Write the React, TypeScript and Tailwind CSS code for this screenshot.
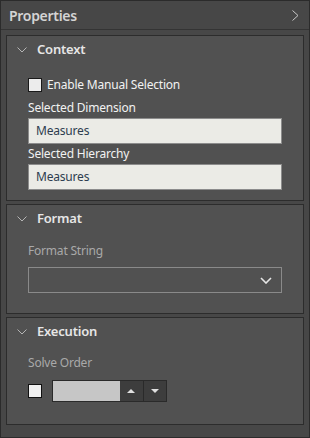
import React from "react";

const font = { fontFamily: '"Segoe UI", "Noto Sans", sans-serif' };

const ChevronDown = ({ className }: { className?: string }) => (
  <svg width="10" height="6" viewBox="0 0 10 6" className={className} fill="none">
    <path d="M0.5 0.5 L5 5 L9.5 0.5" stroke="currentColor" strokeWidth="1" />
  </svg>
);

const Section = ({
  title,
  className,
  children,
}: {
  title: string;
  className: string;
  children: React.ReactNode;
}) => (
  <div className={`mx-[5px] border border-[#2c2c2c] bg-[#515151] flex flex-col ${className}`}>
    <div className="h-[27px] flex items-center pl-[10px] gap-[10px] text-[#b5b5b5]">
      <ChevronDown />
      <span className="text-[13px] font-semibold text-[#e6e6e6] tracking-[-0.2px]">{title}</span>
    </div>
    {children}
  </div>
);

const TextBox = ({ value }: { value: string }) => (
  <div className="h-[26px] w-[254px] border border-[#8c8c8c] bg-[#ebebe6] flex items-center pl-[7px] text-[12px] text-[#2e3d4f] tracking-[-0.2px]">
    {value}
  </div>
);

export default function App() {
  return (
    <div
      className="w-[310px] h-[438px] bg-[#474747] border border-[#2b2b2b] flex flex-col"
      style={font}
    >
      <div className="h-[29px] border-b border-[#343434] flex items-center justify-between pl-[8px] pr-[10px] shrink-0">
        <span className="text-[14px] font-semibold text-[#d4d4d4] tracking-[-0.3px]">Properties</span>
        <svg width="7" height="11" viewBox="0 0 7 11" fill="none" className="text-[#c8c8c8]">
          <path d="M0.5 0.5 L6 5.5 L0.5 10.5" stroke="currentColor" strokeWidth="1" />
        </svg>
      </div>

      <div className="flex flex-col gap-[3px] pt-[5px]">
        <Section title="Context" className="h-[166px]">
          <div className="flex flex-col pl-[21px] pt-[14px]">
            <label className="flex items-center gap-[5px] h-[15px]">
              <span className="w-[14px] h-[14px] border border-[#1a1a1a] bg-[#ececec]" />
              <span className="text-[12px] text-[#f2f2f2] tracking-[-0.2px]">Enable Manual Selection</span>
            </label>
            <div className="text-[12px] text-[#f2f2f2] tracking-[-0.2px] h-[16px] mt-[8px] leading-[16px]">
              Selected Dimension
            </div>
            <div className="mt-[2px]">
              <TextBox value="Measures" />
            </div>
            <div className="text-[12px] text-[#f2f2f2] tracking-[-0.2px] h-[16px] mt-[2px] leading-[16px]">
              Selected Hierarchy
            </div>
            <div className="mt-[2px]">
              <TextBox value="Measures" />
            </div>
          </div>
        </Section>

        <Section title="Format" className="h-[110px]">
          <div className="flex flex-col pl-[21px] pt-[11px]">
            <div className="text-[12px] text-[#a9a9a9] tracking-[-0.2px] h-[16px] leading-[16px]">Format String</div>
            <div className="mt-[8px] h-[26px] w-[254px] border border-[#8a8a8a] flex items-center justify-end pr-[9px] text-[#e6e6e6]">
              <svg width="12" height="7" viewBox="0 0 12 7" fill="none">
                <path d="M1 1 L6 6 L11 1" stroke="currentColor" strokeWidth="1.6" />
              </svg>
            </div>
          </div>
        </Section>

        <Section title="Execution" className="h-[108px]">
          <div className="flex flex-col pl-[21px] pt-[10px]">
            <div className="text-[12px] text-[#a9a9a9] tracking-[-0.2px] h-[16px] leading-[16px]">Solve Order</div>
            <div className="mt-[9px] flex items-center gap-[10px]">
              <span className="w-[14px] h-[14px] border border-[#111] bg-[#f0f0f0]" />
              <div className="h-[22px] w-[115px] border border-[#2a2a2a] flex">
                <div className="w-[67px] bg-[#c6c6c6]" />
                <div className="flex-1 bg-[#3d3d3d] flex items-center justify-center border-r border-[#2a2a2a]">
                  <svg width="8" height="4" viewBox="0 0 8 4">
                    <path d="M0 4 L4 0 L8 4 Z" fill="#e0e0e0" />
                  </svg>
                </div>
                <div className="flex-1 bg-[#3d3d3d] flex items-center justify-center">
                  <svg width="8" height="4" viewBox="0 0 8 4">
                    <path d="M0 0 L8 0 L4 4 Z" fill="#e0e0e0" />
                  </svg>
                </div>
              </div>
            </div>
          </div>
        </Section>
      </div>
    </div>
  );
}
